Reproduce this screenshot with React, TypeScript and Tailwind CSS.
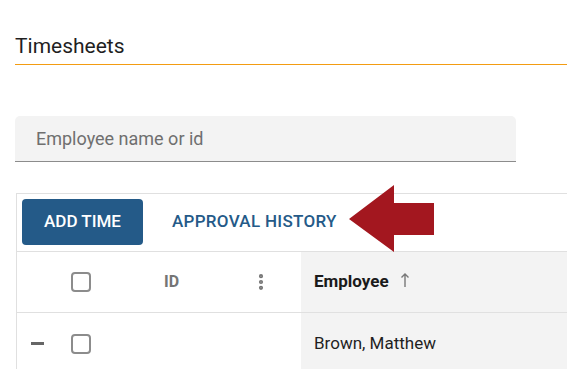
import { MoreVertical } from 'lucide-react';

function Checkbox() {
  return <div className="h-[20px] w-[20px] rounded-[4px] border-2 border-[#8c8c8c] bg-white" />;
}

export default function App() {
  return (
    <div className="relative h-[369px] w-[567px] overflow-hidden bg-white font-['Roboto',sans-serif] text-[#212121]">
      <div className="ml-[15px] pt-[34px]">
        <h1 className="pb-[6px] text-[21px] leading-[24px] text-[#1f1f1f]">Timesheets</h1>
        <div className="h-px bg-[#f39c12]" />
      </div>

      <div className="ml-[15px] mt-[51px] flex h-[46px] w-[501px] items-center rounded-t-[5px] border-b border-[#8c8c8c] bg-[#f3f3f3] pl-[21px]">
        <span className="text-[18px] text-[#6f6f6f]">Employee name or id</span>
      </div>

      <div className="ml-[16px] mt-[31px] w-[600px] border-l border-t border-[#e0e0e0]">
        <div className="flex items-center border-b border-[#e0e0e0] pb-[6px] pl-[5px] pt-[5px]">
          <button
            type="button"
            className="flex h-[46px] w-[121px] items-center justify-center rounded-[4px] bg-[#245a88] text-[17px] font-medium text-white"
          >
            ADD TIME
          </button>
          <span className="ml-[29px] text-[17px] font-medium tracking-[0.3px] text-[#245a88]">APPROVAL HISTORY</span>
        </div>

        <div className="flex h-[61px] border-b border-[#e0e0e0]">
          <div className="w-[40px]" />
          <div className="flex w-[48px] items-center justify-center">
            <Checkbox />
          </div>
          <div className="flex w-[196px] items-center justify-between pl-[59px] pr-[30px]">
            <span className="text-[16px] font-bold text-[#757575]">ID</span>
            <MoreVertical className="h-[20px] w-[20px] text-[#757575]" strokeWidth={3} />
          </div>
          <div className="flex flex-1 items-center bg-[#f3f3f3] pl-[13px]">
            <span className="text-[17px] font-bold text-[#1a1a1a]">Employee</span>
            <svg className="mb-[4px] ml-[11px]" width="10" height="16" viewBox="0 0 10 16" fill="none">
              <path d="M5 15V2M1.5 5.5L5 2l3.5 3.5" stroke="#777" strokeWidth="1.4" />
            </svg>
          </div>
        </div>

        <div className="flex h-[61px]">
          <div className="flex w-[40px] items-center justify-center">
            <div className="h-[3px] w-[13px] bg-[#666]" />
          </div>
          <div className="flex w-[48px] items-center justify-center">
            <Checkbox />
          </div>
          <div className="w-[196px]" />
          <div className="flex flex-1 items-center bg-[#f3f3f3] pl-[13px]">
            <span className="text-[17px] text-[#1f1f1f]">Brown, Matthew</span>
          </div>
        </div>
      </div>

      <svg className="absolute left-0 top-0" width="567" height="369" viewBox="0 0 567 369">
        <polygon points="349,219 394,185 394,203 434,203 434,235 394,235 394,252" fill="#a3171f" />
      </svg>
    </div>
  );
}
